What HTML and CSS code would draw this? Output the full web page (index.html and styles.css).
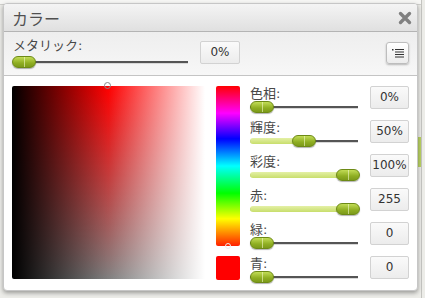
FILE: index.html
```html
<!DOCTYPE html>
<html>
<head>
  <title>カラー</title>
  <link rel="stylesheet" href="styles.css">
</head>
<body>
  <div class="page">
    <div class="page-top"></div>
    <div class="page-band"></div>
  </div>

  <div class="dialog">
    <div class="titlebar">
      <span class="title">カラー</span>
      <svg class="close" width="14" height="14" viewBox="0 0 14 14">
        <path d="M2.5 2.5 L11.5 11.5 M11.5 2.5 L2.5 11.5" stroke="#808080" stroke-width="3.4" stroke-linecap="round"/>
      </svg>
    </div>

    <div class="metal">
      <div class="metal-left">
        <div class="lbl">メタリック:</div>
        <div class="slider">
          <span class="fill" style="width:0px"></span>
          <span class="thumb" style="left:-1px"></span>
        </div>
      </div>
      <div class="val metal-val">0%</div>
      <button class="menu-btn">
        <svg width="12" height="9" viewBox="0 0 12 9">
          <rect x="0" y="0" width="1.5" height="1.5" fill="#333"/>
          <rect x="3" y="0" width="9" height="1" fill="#333"/>
          <rect x="3" y="2.5" width="9" height="1" fill="#333"/>
          <rect x="3" y="5" width="9" height="1" fill="#333"/>
          <rect x="3" y="7.5" width="9" height="1" fill="#333"/>
        </svg>
      </button>
    </div>

    <div class="main">
      <div class="sl-square">
        <span class="sl-marker"></span>
      </div>

      <div class="hue-col">
        <div class="hue-bar"><span class="hue-marker"></span></div>
        <div class="swatch"></div>
      </div>

      <div class="rows">
        <div class="row">
          <div class="row-left">
            <div class="lbl">色相:</div>
            <div class="slider">
              <span class="fill" style="width:0px"></span>
              <span class="thumb" style="left:0px"></span>
            </div>
          </div>
          <div class="val">0%</div>
        </div>
        <div class="row">
          <div class="row-left">
            <div class="lbl">輝度:</div>
            <div class="slider">
              <span class="fill" style="width:54px"></span>
              <span class="thumb" style="left:42px"></span>
            </div>
          </div>
          <div class="val">50%</div>
        </div>
        <div class="row">
          <div class="row-left">
            <div class="lbl">彩度:</div>
            <div class="slider">
              <span class="fill" style="width:96px"></span>
              <span class="thumb" style="left:86px"></span>
            </div>
          </div>
          <div class="val">100%</div>
        </div>
        <div class="row">
          <div class="row-left">
            <div class="lbl">赤:</div>
            <div class="slider">
              <span class="fill" style="width:96px"></span>
              <span class="thumb" style="left:86px"></span>
            </div>
          </div>
          <div class="val">255</div>
        </div>
        <div class="row">
          <div class="row-left">
            <div class="lbl">緑:</div>
            <div class="slider">
              <span class="fill" style="width:0px"></span>
              <span class="thumb" style="left:0px"></span>
            </div>
          </div>
          <div class="val">0</div>
        </div>
        <div class="row">
          <div class="row-left">
            <div class="lbl">青:</div>
            <div class="slider">
              <span class="fill" style="width:0px"></span>
              <span class="thumb" style="left:0px"></span>
            </div>
          </div>
          <div class="val">0</div>
        </div>
      </div>
    </div>
  </div>
</body>
</html>
```

FILE: styles.css
```css
body {
  margin: 0;
  background-color: #ecece8;
  font-family: "DejaVu Sans", "Noto Sans CJK JP", sans-serif;
  width: 425px;
  height: 298px;
  overflow: hidden;
}

.page {
  height: 298px;
  border-right: 1px solid #c4c4c0;
  width: 421px;
}

.page-top {
  height: 4px;
  background-color: #f6f6f4;
  border-bottom: 1px solid #d0d0cc;
}

.page-band {
  margin: 132px 0 0 410px;
  height: 30px;
  background-color: #b9d163;
}

.dialog {
  position: absolute;
  left: 3px;
  top: 3px;
  width: 413px;
  height: 286px;
  background-color: #fff;
  border: 1px solid #c6c6c6;
  border-radius: 4px;
  box-shadow: 0 2px 4px rgba(0, 0, 0, 0.35);
  overflow: hidden;
}

.titlebar {
  height: 27px;
  display: flex;
  align-items: center;
  justify-content: space-between;
  padding: 0 5px 0 8px;
  background: linear-gradient(#f4f4f4, #e0e0e0);
  border-bottom: 1px solid #b4b4b4;
}

.title {
  font-size: 16px;
  color: #505050;
}

.close {
  display: block;
  margin-top: 1px;
}

.metal {
  height: 43px;
  display: flex;
  align-items: flex-start;
  padding: 0 8px 0 9px;
  background: linear-gradient(#eeeeee, #f7f7f7);
  border-bottom: 1px solid #c4c4c4;
}

.metal-left {
  width: 175px;
  padding-top: 6px;
}

.metal-left .slider {
  margin-top: 3px;
}

.lbl {
  font-size: 13px;
  line-height: 15px;
  color: #484848;
}

.slider {
  position: relative;
  height: 12px;
}

.slider::before {
  content: "";
  position: absolute;
  left: 0;
  right: 0;
  top: 5px;
  height: 2px;
  background-color: #555;
  border-bottom: 1px solid #d8d8d8;
}

.fill {
  position: absolute;
  left: 0;
  top: 3px;
  height: 6px;
  border-radius: 3px;
  background: linear-gradient(#e4f0a6, #c8de6c);
}

.thumb {
  position: absolute;
  top: 0;
  width: 22px;
  height: 10px;
  border: 1px solid #6d8a16;
  border-radius: 6px;
  background: linear-gradient(#c2dc56, #8fae22 60%, #7c9a1a);
  box-shadow: 0 1px 1px rgba(0, 0, 0, 0.3);
}

.thumb::after {
  content: "";
  position: absolute;
  left: 11px;
  top: 0;
  width: 1px;
  height: 10px;
  background-color: rgba(240, 248, 200, 0.6);
}

.val {
  width: 37px;
  height: 21px;
  line-height: 21px;
  border: 1px solid #d2d2d2;
  border-radius: 2px;
  background: linear-gradient(#fafafa, #ececec);
  text-align: center;
  font-size: 12px;
  color: #333;
}

.metal-val {
  width: 38px;
  margin: 9px 0 0 12px;
}

.menu-btn {
  margin: 10px 0 0 auto;
  width: 23px;
  height: 22px;
  padding: 0;
  display: flex;
  align-items: center;
  justify-content: center;
  border: 1px solid #bdbdbd;
  border-radius: 3px;
  background: linear-gradient(#ffffff, #ececec);
  box-shadow: 0 1px 2px rgba(0, 0, 0, 0.25);
}

.main {
  display: flex;
  padding: 10px 8px 0 8px;
}

.sl-square {
  position: relative;
  width: 193px;
  height: 193px;
  border-radius: 2px;
  background:
    linear-gradient(to right, #000 0%, rgba(0, 0, 0, 0) 50%, rgba(255, 255, 255, 0) 50%, #fff 100%),
    linear-gradient(to bottom, #ff0000, #808080);
}

.sl-marker {
  position: absolute;
  left: 92px;
  top: -4px;
  width: 5px;
  height: 5px;
  border: 1px solid #888;
  border-radius: 50%;
}

.hue-col {
  margin-left: 11px;
  width: 24px;
}

.hue-bar {
  position: relative;
  height: 160px;
  border-radius: 2px;
  background: linear-gradient(#ff0000, #ff00ff 17%, #0000ff 33%, #00ffff 50%, #00ff00 67%, #ffff00 83%, #ff2000);
}

.hue-marker {
  position: absolute;
  left: 9px;
  bottom: -3px;
  width: 4px;
  height: 4px;
  border: 1px solid #eee;
  border-radius: 50%;
}

.swatch {
  margin-top: 10px;
  height: 24px;
  border-radius: 2px;
  background-color: #ff0000;
}

.rows {
  margin-left: 10px;
}

.row {
  height: 34px;
  display: flex;
  align-items: flex-start;
}

.row-left {
  width: 108px;
}

.row .val {
  margin-left: 12px;
}
```
